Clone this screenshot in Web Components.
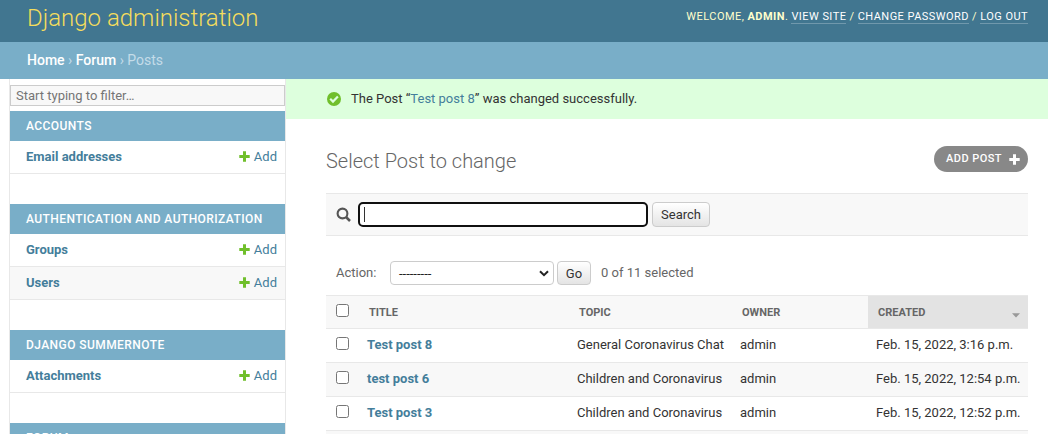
<!DOCTYPE html>
<html lang="en">
<head>
<meta charset="utf-8">
<title>Select Post to change | Django site admin</title>
<style>
html,body{margin:0;height:434px;overflow:hidden;background:#fff}
body{font-family:Roboto,"Liberation Sans",sans-serif;font-size:13px;color:#333}
</style>
</head>
<body>
<admin-page></admin-page>
<script>
function define(name, html) {
  const template = document.createElement('template');
  template.innerHTML = '<style>*{box-sizing:border-box}a{color:#447e9b;text-decoration:none}</style>' + html;
  customElements.define(name, class extends HTMLElement {
    constructor() {
      super();
      this.attachShadow({mode: 'open'}).appendChild(template.content.cloneNode(true));
    }
  });
}

define('admin-header', `
<style>
:host{display:flex;justify-content:space-between;height:42px;background:#417690;color:#ffc;padding:0 20px 0 27px;box-sizing:border-box}
h1{margin:0;font-size:24px;font-weight:300;line-height:36px;color:#f5dd5d;white-space:nowrap}
.tools{font-size:11px;line-height:16px;padding-top:9px;letter-spacing:.45px;font-weight:400;white-space:nowrap}
.tools a{color:#fff;border-bottom:1px solid rgba(255,255,255,.25);font-weight:400}
b{font-weight:700}
</style>
<h1>Django administration</h1>
<div class="tools">WELCOME, <b>ADMIN</b>. <a href="#">VIEW SITE</a> / <a href="#">CHANGE PASSWORD</a> / <a href="#">LOG OUT</a></div>`);

define('admin-breadcrumbs', `
<style>
:host{display:block;height:37px;background:#79aec8;color:#c4dce8;padding-left:27px;font-size:14px;line-height:36px;box-sizing:border-box}
a{color:#fff;font-weight:500}
</style>
<a href="#">Home</a> › <a href="#">Forum</a> › Posts`);

define('plus-icon', `
<style>:host{display:block;width:11px;height:11px;color:#70bf2b}svg{display:block;width:100%;height:100%}</style>
<svg viewBox="0 0 11 11"><path fill="currentColor" d="M4 .3h3V4h3.7v3H7v3.7H4V7H.3V4H4z"/></svg>`);

define('model-row', `
<style>
:host{display:flex;align-items:center;height:33px;border-bottom:1px solid #e8e8e8;padding:0 8px 0 16px;box-sizing:border-box;line-height:16px;background:var(--row-bg,#fff)}
.name{flex:1;font-weight:700}
.add{display:flex;align-items:center;gap:4px}
plus-icon{margin-bottom:1px}
</style>
<a class="name" href="#"><slot></slot></a><a class="add" href="#"><plus-icon></plus-icon>Add</a>`);

define('app-module', `
<style>
:host{display:block;margin-bottom:30px}
.caption{height:30px;background:#79aec8;color:#fff;font-size:12px;font-weight:500;letter-spacing:.43px;line-height:30px;padding-left:16px;white-space:nowrap}
</style>
<div class="caption"><slot name="caption"></slot></div><slot></slot>`);

define('admin-sidebar', `
<style>
:host{display:block;width:277px;margin-left:9px;border:solid #e8e8e8;border-width:0 1px;padding-top:6px;flex:none;box-sizing:border-box;background:#fff}
.filter{height:21px;border:1px solid #ccc;background:#f8f8f8;color:#757575;line-height:19px;padding-left:5px;margin-bottom:5px}
</style>
<div class="filter">Start typing to filter…</div>
<app-module><span slot="caption">ACCOUNTS</span><model-row>Email addresses</model-row></app-module>
<app-module><span slot="caption">AUTHENTICATION AND AUTHORIZATION</span><model-row>Groups</model-row><model-row style="--row-bg:#f8f8f8">Users</model-row></app-module>
<app-module><span slot="caption">DJANGO SUMMERNOTE</span><model-row>Attachments</model-row></app-module>
<app-module><span slot="caption">FORUM</span></app-module>`);

define('success-message', `
<style>
:host{display:flex;align-items:center;gap:10px;height:40px;background:#dfd;padding-left:41px;line-height:16px}
svg{display:block;width:14px;height:14px}
</style>
<svg viewBox="0 0 14 14"><circle cx="7" cy="7" r="7" fill="#70bf2b"/><path d="M3.2 6.8 6 9.6l4.9-5" fill="none" stroke="#dfd" stroke-width="2.2"/></svg>
<span>The Post “<a href="#">Test post 8</a>” was changed successfully.</span>`);

define('push-button', `
<style>
:host{display:flex;align-items:center;justify-content:center;border:1px solid #ccc;border-radius:4px;background:linear-gradient(#fff,#e4e4e4);box-sizing:border-box;color:#333}
</style><slot></slot>`);

define('title-bar', `
<style>
:host{display:flex;justify-content:space-between;align-items:flex-start;height:47px}
h1{margin:3px 0 0;font-size:20px;font-weight:300;line-height:24px;color:#666}
.add{display:flex;align-items:center;height:26px;width:94px;border-radius:13px;background:#888;color:#fff;font-size:11px;font-weight:500;letter-spacing:.45px;padding:0 8px 2px 12px;justify-content:space-between;white-space:nowrap}
plus-icon{color:#fff;margin-top:3px}
</style>
<h1>Select Post to change</h1>
<a class="add" href="#">ADD POST<plus-icon></plus-icon></a>`);

define('search-bar', `
<style>
:host{display:flex;align-items:flex-start;height:43px;border:solid #e8e8e8;border-width:1px 0;background:#f8f8f8;padding:8px 10px;box-sizing:border-box}
svg{width:15px;height:15px;margin:5px 7px 0 0;flex:none}
.box{width:290px;height:25px;border:2px solid #101010;border-radius:5px;background:#fff;padding:3px 4px;margin-right:4px}
.caret{width:1px;height:15px;background:#333}
push-button{width:58px;height:25px}
</style>
<svg viewBox="0 0 15 15" fill="none" stroke="#555"><circle cx="6.5" cy="6.5" r="4.9" stroke-width="2.1"/><path d="m10 10 4 4" stroke-width="2.5"/></svg>
<div class="box" role="textbox"><div class="caret"></div></div>
<push-button>Search</push-button>`);

define('action-bar', `
<style>
:host{display:flex;align-items:center;height:24px;margin:25px 0 10px;padding-left:10px;color:#666}
.label{width:54px}
.label,.count{padding-bottom:2px}
.select{display:flex;align-items:center;justify-content:space-between;width:164px;height:24px;border:1px solid #ccc;border-radius:4px;padding:0 4px 0 8px;color:#222;margin-right:3px;background:#fff}
svg{width:10px;height:7px}
push-button{width:34px;height:24px;margin-right:10px;padding-top:1px}
</style>
<span class="label">Action:</span>
<div class="select" role="combobox"><span>---------</span><svg viewBox="0 0 10 7"><path d="m1 1.2 4 4 4-4" fill="none" stroke="#222" stroke-width="2"/></svg></div>
<push-button>Go</push-button><span class="count">0 of 11 selected</span>`);

define('check-box', `
<style>:host{display:block;width:13px;height:13px;border:1px solid #767676;border-radius:2.5px;background:#fff;box-sizing:border-box}</style>`);

define('result-row', `
<style>
:host{display:grid;grid-template-columns:33px 210px 163px 136px 160px;height:34px;border-bottom:1px solid #e8e8e8;box-sizing:border-box;background:var(--row-bg,#fff);white-space:nowrap}
.cell{padding:8px 8px 0;line-height:16px}
check-box{margin-left:2px}
.title{font-weight:700}
</style>
<div class="cell"><check-box></check-box></div>
<div class="cell title"><a href="#"><slot name="title"></slot></a></div>
<div class="cell"><slot name="topic"></slot></div>
<div class="cell">admin</div>
<div class="cell"><slot name="created"></slot></div>`);

define('result-head', `
<style>
:host{display:grid;grid-template-columns:33px 210px 163px 136px 160px;height:34px;border:solid #e8e8e8;border-width:1px 0;box-sizing:border-box;background:#f8f8f8;color:#666;font-size:11px;font-weight:700}
.cell{padding:1px 10px 0;line-height:32px;height:32px}
check-box{margin-top:7px}
.sorted{display:flex;justify-content:space-between;background:#e3e3e3;padding-right:8px}
svg{width:8px;height:5px;margin-top:16px}
</style>
<div class="cell"><check-box></check-box></div><div class="cell">TITLE</div><div class="cell">TOPIC</div><div class="cell">OWNER</div>
<div class="cell sorted">CREATED<svg viewBox="0 0 8 5"><path fill="#999" d="M0 .3h8L4 4.6z"/></svg></div>`);

define('change-list', `
<style>:host{display:block;padding:27px 20px 0 41px}.next{height:34px;background:#f8f8f8}</style>
<title-bar></title-bar><search-bar></search-bar><action-bar></action-bar>
<result-head></result-head>
<result-row><span slot="title">Test post 8</span><span slot="topic">General Coronavirus Chat</span><span slot="created">Feb. 15, 2022, 3:16 p.m.</span></result-row>
<result-row style="--row-bg:#f8f8f8"><span slot="title">test post 6</span><span slot="topic">Children and Coronavirus</span><span slot="created">Feb. 15, 2022, 12:54 p.m.</span></result-row>
<result-row><span slot="title">Test post 3</span><span slot="topic">Children and Coronavirus</span><span slot="created">Feb. 15, 2022, 12:52 p.m.</span></result-row>
<div class="next"></div>`);

define('admin-page', `
<style>
:host{display:flex;flex-direction:column;height:434px;overflow:hidden}
.main{display:flex;flex:1;min-height:0}
.content{flex:1;min-width:0}
change-list{margin-left:-1px}
</style>
<admin-header></admin-header><admin-breadcrumbs></admin-breadcrumbs>
<div class="main"><admin-sidebar></admin-sidebar><div class="content"><success-message></success-message><change-list></change-list></div></div>`);
</script>
</body>
</html>
